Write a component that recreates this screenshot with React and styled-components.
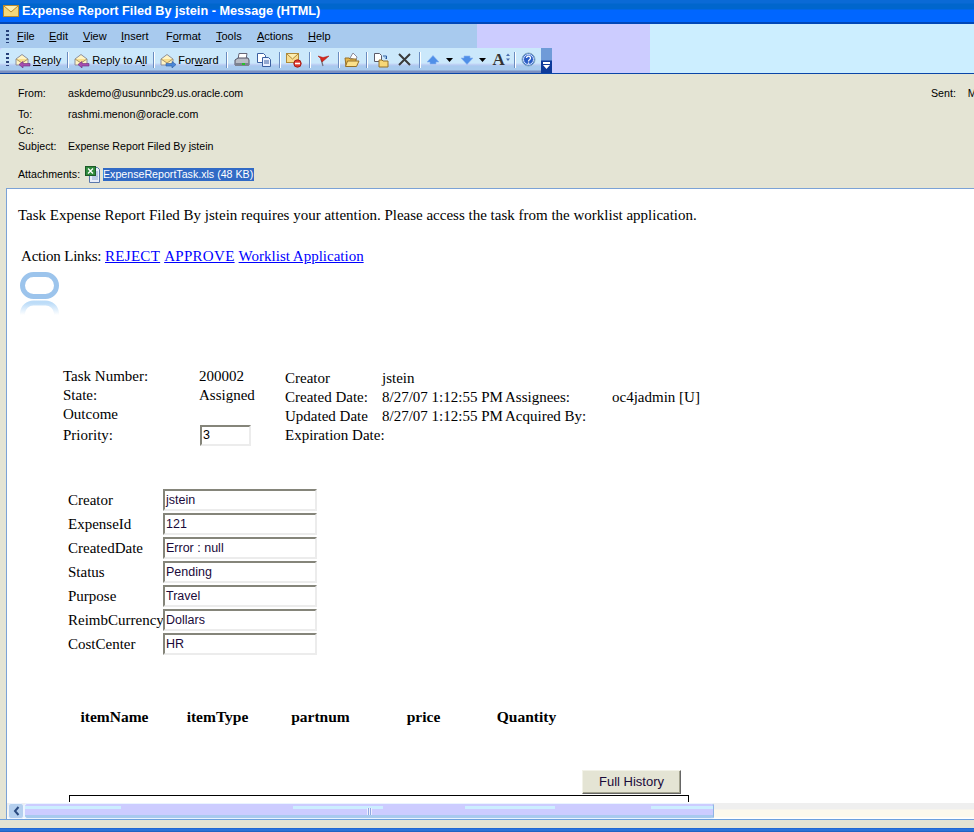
import React from 'react';
import styled, { createGlobalStyle } from 'styled-components';

const Global = createGlobalStyle`
  html, body { margin: 0; padding: 0; height: 100%; overflow: hidden; background: #e4e4d4; }
  #root { width: 974px; height: 832px; }
`;
const Win = styled.div`
  width: 974px; height: 832px; display: flex; flex-direction: column; overflow: hidden;
  font-family: "Liberation Sans", Arial, sans-serif; background: #e4e4d4;
`;
const TitleBar = styled.div`
  height: 24px; flex: none; display: flex; align-items: center; gap: 3px; padding: 0 0 2px 3px; box-sizing: border-box;
  background: linear-gradient(#0a6ad6 0, #0a6ad6 3px, #0066cc 4px, #0066cc 9px, #0066ff 10px, #0066ff 22px, #0047b8 22px);
  color: #fff; font: bold 12.7px "Liberation Sans", Arial, sans-serif;
`;
const Bands = styled.div`
  height: 49px; flex: none; display: flex; background: #cceeff; border-bottom: 1px solid #0a45a8; box-sizing: content-box;
`;
const BandStack = styled.div`
  width: 650px; background: #ccccff; display: flex; flex-direction: column;
`;
const MenuBar = styled.div`
  width: 477px; height: 24px; background: #a8caee; display: flex; align-items: center; padding-left: 6px; box-sizing: border-box; font-size: 11px; color: #000;
`;
const Grip = styled.span`
  width: 3px; height: 13px; flex: none; margin-right: 8px;
  background: repeating-linear-gradient(#27417a 0 2px, transparent 2px 4px);
`;
const MenuItem = styled.span`
  width: ${p => p.$w}px; flex: none;
  u { text-decoration: underline; }
`;
const ToolBar = styled.div`
  position: relative; width: 552px; height: 25px; box-sizing: border-box; display: flex; align-items: center; padding: 0 0 2px 6px;
  background: linear-gradient(#cbe8fb 0, #cbe8fb 15px, #b9c9f2 17px, #a8caee 18px, #a8caee 22px, #7b8fc0 23px, #7b8fc0 25px);
  border-radius: 3px 0 0 0; font-size: 11px; color: #000;
`;
const ToolGrip = styled(Grip)`margin-right: 5px;`;
const ToolBtn = styled.span`
  display: inline-flex; align-items: center; gap: 1px; height: 20px; flex: none; margin-right: ${p => p.$gap ?? 0}px;
  svg { flex: none; display: block; }
`;
const Sep = styled.span`
  width: 1px; height: 16px; flex: none; background: #6a8cc0; border-right: 1px solid #fff;
  margin: 0 ${p => p.$r ?? 4}px 0 ${p => p.$l ?? 6}px;
`;
const Overflow = styled.span`
  position: absolute; right: 0; top: 0; width: 11px; height: 25px; display: flex; align-items: flex-end; justify-content: center; padding-bottom: 3px; box-sizing: border-box;
  background: linear-gradient(#6f9bd8 0, #6f9bd8 12px, #0d3a9a 13px);
`;
const Header = styled.div`
  height: 114px; flex: none; box-sizing: border-box; padding-top: 13px; font-size: 10.65px; color: #000; background: #e4e4d4; position: relative; overflow: hidden;
`;
const HRow = styled.div`
  display: flex; height: ${p => p.$h}px; padding-left: 18px; align-items: flex-start;
`;
const HLabel = styled.span`width: 50px; flex: none;`;
const Sent = styled.span`
  position: absolute; left: 931px; top: 13px; white-space: nowrap; display: flex; gap: 12px;
`;
const Selected = styled.span`
  background: #316ac5; color: #fff; padding: 0 0 1px 0; line-height: 12px; width: 151px; white-space: nowrap;
`;
const AttachRow = styled.div`
  display: flex; align-items: center; padding-left: 18px; height: 18px; gap: 2px;
`;
const AttachLabel = styled.span`width: 65px; flex: none;`;
const BodyFrame = styled.div`
  flex: 1; min-height: 0; margin-left: 6px; background: #fff; border: 1px solid #7ba2d6; border-right: 0; border-bottom: 0; display: flex; flex-direction: column; overflow: hidden;
`;
const Doc = styled.div`
  flex: 1; min-height: 0; overflow: hidden; padding: 18px 0 0 11px;
  font: 15px/17px "Liberation Serif", "Times New Roman", serif; color: #000;
`;
const Para = styled.div`margin: 0; white-space: nowrap;`;
const Actions = styled.div`
  margin: 24px 0 0 3px; white-space: nowrap;
  a { color: #0000ff; text-decoration: underline; margin-right: 4px; }
`;
const ActionLabel = styled.span`display: inline-block; width: 84px; letter-spacing: -0.2px;`;
const CapsLink = styled.a`letter-spacing: 0.3px;`;
const LogoWrap = styled.div`
  margin: 7px 0 0 2px; height: 44px;
`;
const TaskGrid = styled.div`
  display: flex; margin: 51px 0 0 45px;
`;
const TaskLeft = styled.div`
  display: grid; grid-template-columns: 136px 86px; grid-template-rows: 19px 19px 19px 23px; align-items: center;
`;
const TaskRight = styled.div`
  display: grid; grid-template-columns: 97px 123px 107px auto; grid-auto-rows: 19px; align-items: center; margin-top: 2px; white-space: nowrap;
`;
const TinyField = styled.div`
  width: 51px; height: 21px; margin-left: 1px; box-sizing: border-box; border: 2px solid; border-color: #85857a #ececec #ececec #85857a; font: 12.5px/17px "Liberation Sans", Arial, sans-serif; padding-left: 1px; color: #000;
`;
const FormGrid = styled.div`
  display: grid; grid-template-columns: 95px 154px; grid-auto-rows: 24px; margin: 41px 0 0 50px; align-items: center;
`;
const Field = styled.div`
  width: 154px; height: 22px; box-sizing: border-box; border: 2px solid; border-color: #85857a #ececec #ececec #85857a; font: 12.5px/18px "Liberation Sans", Arial, sans-serif; padding-left: 1px; color: #1a0a3a;
`;
const Items = styled.div`
  display: grid; grid-template-columns: repeat(5, 103px); margin: 52px 0 0 45px; font-weight: bold; font-size: 15.5px; text-align: center;
`;
const HistoryRow = styled.div`
  display: flex; margin: 45px 0 0 564px;
`;
const HistoryBtn = styled.div`
  width: 99px; height: 24px; box-sizing: border-box; background: #e4e4d4; color: #1a0a3a;
  border: 1px solid; border-color: #f2f2e8 #666 #666 #f2f2e8; box-shadow: inset -1px -1px 0 #a2a28e;
  font: 13px/21px "Liberation Sans", Arial, sans-serif; text-align: center;
`;
const BoxTop = styled.div`
  width: 620px; height: 7px; margin: 1px 0 0 51px; box-sizing: border-box; border: 1px solid #000; border-bottom: 0;
`;
const HScroll = styled.div`
  height: 16px; flex: none; display: flex; background: linear-gradient(#efefef 0, #efefef 6px, #fdf9ec 7px, #fdf9ec 14px, #fff 15px);
`;
const ArrowBtn = styled.div`
  width: 16px; margin-left: 1px; flex: none; box-sizing: border-box; border: 1px solid #eef4ff; border-radius: 3px; background: #b4cfee; display: flex; align-items: center; justify-content: center;
`;
const Thumb = styled.div`
  width: 690px; flex: none; box-sizing: border-box; border: 1px solid #eaf4ff; border-right-color: #8fb4e4; border-radius: 3px; display: flex; align-items: center; justify-content: center;
  background:
    linear-gradient(90deg, #cceeff 0 14%, transparent 14% 39%, #cceeff 39% 52%, transparent 52% 64%, #cceeff 64% 77%, transparent 77% 91%, #cceeff 91%) 0 2px / 100% 3px no-repeat,
    linear-gradient(#a8caee, #a8caee) 0 bottom / 100% 3px no-repeat,
    #ccccff;
`;
const ThumbGrip = styled.span`
  width: 5px; height: 7px; background: repeating-linear-gradient(90deg, #eef 0 1px, #8fa8e0 1px 2px);
`;
const Foot = styled.div`
  height: 12px; flex: none; background: linear-gradient(#e4e4d4 0, #e4e4d4 8px, #1c63cf 8px, #2f7ae0 10px, #1a5cb8 12px); border-top: 1px solid #6ea0dd; box-sizing: content-box;
`;

const EnvelopeTitle = () => (
  <svg width="16" height="14" viewBox="0 0 16 14"><rect x="0.5" y="1.5" width="15" height="11" fill="#f5d77a" stroke="#b98a2e"/><path d="M1 2l7 6 7-6" fill="#fdeeb0" stroke="#b98a2e"/></svg>
);
const Mail = ({ arrow }) => (
  <svg width="18" height="16" viewBox="0 0 18 16">
    <path d="M2 7 8 2.500 14 7v6H2z" fill="#fff4c4" stroke="#8c8f9c"/>
    <path d="M2 7l6 4 6-4" fill="#f8dd8e" stroke="#a8966a"/>
    {arrow === 'left' && <path d="M5 12.500 9 9.500v2h7v2.500H9v2z" fill="#a64db0" stroke="#6a2a80" strokeWidth="0.6"/>}
    {arrow === 'right' && <path d="M17 12.500 13 9.500v2H7v2.500h6v2z" fill="#4a86d8" stroke="#2a5aa0" strokeWidth="0.6"/>}
  </svg>
);
const Printer = () => (
  <svg width="16" height="16" viewBox="0 0 16 16"><path d="M5 1.500h8l-1 6H4z" fill="#fff" stroke="#667"/><path d="M1 8l3-2h10l1 2v5H1z" fill="#b9bdc6" stroke="#556"/><rect x="1" y="11" width="14" height="3" fill="#7c8290"/><rect x="8" y="11" width="3" height="2" fill="#25c22a"/></svg>
);
const CopyIcon = () => (
  <svg width="16" height="16" viewBox="0 0 16 16"><path d="M1.500 1.500h6l2 2v7h-8z" fill="#fff" stroke="#3a5fa0"/><path d="M6.500 5.500h6l2 2v7h-8z" fill="#eaf1ff" stroke="#3a5fa0"/><path d="M8 9h5M8 11h5" stroke="#3a5fa0"/></svg>
);
const MailDelete = () => (
  <svg width="16" height="16" viewBox="0 0 16 16"><rect x="0.500" y="1.500" width="12" height="9" fill="#f8dd8e" stroke="#b08a3a"/><path d="M1 2l5.500 5L12 2" fill="#fdeeb0" stroke="#b08a3a"/><circle cx="11.500" cy="11.500" r="3.700" fill="#e0352a" stroke="#a0201a"/><rect x="9" y="10.700" width="5" height="1.600" fill="#fff"/></svg>
);
const Flag = () => (
  <svg width="14" height="16" viewBox="0 0 14 16"><path d="M6 14 4 7" stroke="#70707a" strokeWidth="1.200"/><path d="M1 4l5 1.500L12 4 8 7.500 5 10 3.500 6.500z" fill="#d8261c" stroke="#a01810" strokeWidth="0.5"/></svg>
);
const Folder = () => (
  <svg width="16" height="16" viewBox="0 0 16 16"><path d="M6 6 9 1l4 4-1 3z" fill="#fff" stroke="#8a8a9a"/><path d="M1 6h4l1 1h6v7H2z" fill="#e8b84a" stroke="#94702a"/><path d="M3.500 9H15l-2.500 5.500H1.500z" fill="#fbe08a" stroke="#94702a"/></svg>
);
const MoveIcon = () => (
  <svg width="16" height="16" viewBox="0 0 16 16"><path d="M1.500 1.500h5l2 2v6h-7z" fill="#fff" stroke="#5a5a6a"/><path d="M6 8h3l1 1h5v6H6z" fill="#f6d778" stroke="#94702a"/><path d="M10 4h3.500v3M13.500 7 12 5.500" fill="none" stroke="#2a5aa0"/></svg>
);
const Cross = () => (
  <svg width="15" height="15" viewBox="0 0 15 15"><path d="M2 2l11 11M13 2 2 13" stroke="#3a3a3a" strokeWidth="2"/></svg>
);
const UpArrow = () => (
  <svg width="14" height="12" viewBox="0 0 14 12">
    <path d="M7 1.500 13 8H10v2H4V8H1z" fill="#4f8fe8" stroke="#8ab4f0" strokeWidth="0.6"/>
  </svg>
);
const DownArrow = () => (
  <svg width="14" height="12" viewBox="0 0 14 12">
    <path d="M7 10.500 13 4H10V2H4v2H1z" fill="#4f8fe8" stroke="#8ab4f0" strokeWidth="0.6"/>
  </svg>
);
const Caret = () => (
  <svg width="7" height="4" viewBox="0 0 7 4"><path d="M0 0h7L3.500 4z" fill="#000"/></svg>
);
const FontIcon = () => (
  <svg width="18" height="16" viewBox="0 0 18 16"><path d="M15 1.500 17 4h-4zM15 9l2-2.500h-4z" fill="#4a6fb0"/></svg>
);
const BigA = styled.span`
  font: bold 17px/16px "Liberation Serif", serif; color: #333; margin-right: -19px; width: 18px; position: relative; z-index: 1;
`;
const Help = () => (
  <svg width="15" height="15" viewBox="0 0 15 15"><circle cx="7.500" cy="7.500" r="6.500" fill="#3a70d8" stroke="#8ab"/><circle cx="7.500" cy="7.500" r="5" fill="#2a5cc4" stroke="#dbe8ff"/><path d="M5.500 6a2 2 0 1 1 3 1.800c-.8.500-1 .8-1 1.700" fill="none" stroke="#fff" strokeWidth="1.300"/><rect x="6.900" y="10.500" width="1.300" height="1.300" fill="#fff"/></svg>
);
const Xls = () => (
  <svg width="16" height="17" viewBox="0 0 16 17"><path d="M4.500 1.500h8l2 2v13h-10z" fill="#e8eefb" stroke="#5a78ac"/><path d="M7 11h6M7 13h6M12 5v6" stroke="#8ea8d0"/><rect x="0.500" y="0.500" width="10" height="9" fill="#2f8a3c" stroke="#1c5a28"/><path d="M3 2.500l5 5M8 2.500l-5 5" stroke="#fff" strokeWidth="1.300"/></svg>
);
const OracleLogo = () => (
  <svg width="40" height="44" viewBox="0 0 40 44">
    <defs>
      <linearGradient id="fade" x1="0" y1="0" x2="0" y2="1"><stop offset="0" stopColor="#bcdcf8"/><stop offset="1" stopColor="#fff"/></linearGradient>
    </defs>
    <rect x="2.500" y="2.500" width="34" height="22" rx="11" fill="none" stroke="#9cc4ec" strokeWidth="5"/>
    <path d="M2.500 43V41a11 11 0 0 1 11-10h12a11 11 0 0 1 11 10v2" fill="none" stroke="url(#fade)" strokeWidth="5"/>
  </svg>
);
const Chev = () => (
  <svg width="7" height="10" viewBox="0 0 7 10"><path d="M5.500 1 2 5l3.500 4" fill="none" stroke="#2a4a80" strokeWidth="2"/></svg>
);
const MoreGlyph = () => (
  <svg width="7" height="8" viewBox="0 0 7 8"><rect x="0" y="0" width="7" height="2" fill="#fff"/><path d="M0 3h7L3.500 7z" fill="#fff"/></svg>
);

const menus = [['F', 'ile', 32], ['E', 'dit', 34], ['V', 'iew', 38], ['I', 'nsert', 45], ['', 'Format', 50], ['T', 'ools', 41], ['A', 'ctions', 51], ['H', 'elp', 30]];
const fields = [['Creator', 'jstein'], ['ExpenseId', '121'], ['CreatedDate', 'Error : null'], ['Status', 'Pending'], ['Purpose', 'Travel'], ['ReimbCurrency', 'Dollars'], ['CostCenter', 'HR']];

export default function App() {
  return (
    <Win>
      <Global />
      <TitleBar><EnvelopeTitle /><span>Expense Report Filed By jstein - Message (HTML)</span></TitleBar>
      <Bands>
        <BandStack>
          <MenuBar>
            <Grip />
            {menus.map(([u, r, w]) => (
              <MenuItem key={r} $w={w}>{u ? <><u>{u}</u>{r}</> : <>F<u>o</u>rmat</>}</MenuItem>
            ))}
          </MenuBar>
          <ToolBar>
            <ToolGrip />
            <ToolBtn><Mail arrow="left" /><span><u>R</u>eply</span></ToolBtn>
            <Sep />
            <ToolBtn><Mail arrow="left" /><span>Reply to A<u>l</u>l</span></ToolBtn>
            <Sep />
            <ToolBtn><Mail arrow="right" /><span>For<u>w</u>ard</span></ToolBtn>
            <Sep $l={7} $r={6} />
            <ToolBtn $gap={6}><Printer /></ToolBtn>
            <ToolBtn><CopyIcon /></ToolBtn>
            <Sep $l={7} $r={5} />
            <ToolBtn><MailDelete /></ToolBtn>
            <Sep $l={7} $r={6} />
            <ToolBtn><Flag /></ToolBtn>
            <Sep $l={7} $r={4} />
            <ToolBtn><Folder /></ToolBtn>
            <Sep $l={6} $r={5} />
            <ToolBtn $gap={8}><MoveIcon /></ToolBtn>
            <ToolBtn><Cross /></ToolBtn>
            <Sep $l={7} $r={5} />
            <ToolBtn $gap={6}><UpArrow /></ToolBtn>
            <ToolBtn $gap={7}><Caret /></ToolBtn>
            <ToolBtn $gap={5}><DownArrow /></ToolBtn>
            <ToolBtn $gap={7}><Caret /></ToolBtn>
            <ToolBtn><BigA>A</BigA><FontIcon /></ToolBtn>
            <Sep $l={3} $r={5} />
            <ToolBtn><Help /></ToolBtn>
            <Overflow><MoreGlyph /></Overflow>
          </ToolBar>
        </BandStack>
      </Bands>
      <Header>
        <Sent><span>Sent:</span><span>M</span></Sent>
        <HRow $h={21}><HLabel>From:</HLabel><span>askdemo@usunnbc29.us.oracle.com</span></HRow>
        <HRow $h={16}><HLabel>To:</HLabel><span>rashmi.menon@oracle.com</span></HRow>
        <HRow $h={16}><HLabel>Cc:</HLabel></HRow>
        <HRow $h={25}><HLabel>Subject:</HLabel><span>Expense Report Filed By jstein</span></HRow>
        <AttachRow><AttachLabel>Attachments:</AttachLabel><Xls /><Selected>ExpenseReportTask.xls (48 KB)</Selected></AttachRow>
      </Header>
      <BodyFrame>
        <Doc>
          <Para>Task Expense Report Filed By jstein requires your attention. Please access the task from the worklist application.</Para>
          <Actions><ActionLabel>Action Links:</ActionLabel><CapsLink href="#r">REJECT</CapsLink><CapsLink href="#a">APPROVE</CapsLink><a href="#w">Worklist Application</a></Actions>
          <LogoWrap><OracleLogo /></LogoWrap>
          <TaskGrid>
            <TaskLeft>
              <span>Task Number:</span><span>200002</span>
              <span>State:</span><span>Assigned</span>
              <span>Outcome</span><span />
              <span>Priority:</span><TinyField>3</TinyField>
            </TaskLeft>
            <TaskRight>
              <span>Creator</span><span>jstein</span><span /><span />
              <span>Created Date:</span><span>8/27/07 1:12:55 PM</span><span>Assignees:</span><span>oc4jadmin [U]</span>
              <span>Updated Date</span><span>8/27/07 1:12:55 PM</span><span>Acquired By:</span><span />
              <span>Expiration Date:</span><span /><span /><span />
            </TaskRight>
          </TaskGrid>
          <FormGrid>
            {fields.map(([k, v]) => (
              <React.Fragment key={k}><span>{k}</span><Field>{v}</Field></React.Fragment>
            ))}
          </FormGrid>
          <Items><span>itemName</span><span>itemType</span><span>partnum</span><span>price</span><span>Quantity</span></Items>
          <HistoryRow><HistoryBtn>Full History</HistoryBtn></HistoryRow>
          <BoxTop />
        </Doc>
        <HScroll>
          <ArrowBtn><Chev /></ArrowBtn>
          <Thumb><ThumbGrip /></Thumb>
        </HScroll>
      </BodyFrame>
      <Foot />
    </Win>
  );
}
